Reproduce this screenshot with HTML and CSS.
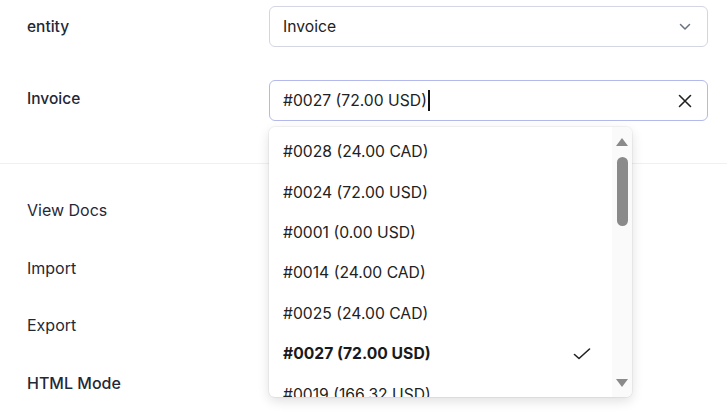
FILE: index.html
```html
<!DOCTYPE html>
<html>
<head>
<meta charset="utf-8">
<link rel="stylesheet" href="styles.css">
</head>
<body>
<div class="page">
  <section class="form">
    <div class="row">
      <div class="label">entity</div>
      <div class="field">
        <span class="value">Invoice</span>
        <svg class="chev" width="12" height="8" viewBox="0 0 12 8"><path d="M1.5 1.5 L6 6 L10.5 1.5" fill="none" stroke="#6b7280" stroke-width="1.5" stroke-linecap="round" stroke-linejoin="round"/></svg>
      </div>
    </div>
    <div class="row row-second">
      <div class="label label-up">Invoice</div>
      <div class="field focused">
        <span class="value">#0027 (72.00 USD)<span class="caret"></span></span>
        <svg class="clear" width="14" height="14" viewBox="0 0 14 14"><path d="M1.5 1.5 L12.5 12.5 M12.5 1.5 L1.5 12.5" fill="none" stroke="#222" stroke-width="1.6" stroke-linecap="round"/></svg>
        <div class="dropdown">
          <ul class="options">
            <li>#0028 (24.00 CAD)</li>
            <li>#0024 (72.00 USD)</li>
            <li>#0001 (0.00 USD)</li>
            <li>#0014 (24.00 CAD)</li>
            <li>#0025 (24.00 CAD)</li>
            <li class="selected"><span>#0027 (72.00 USD)</span><svg width="18" height="12" viewBox="0 0 18 12"><path d="M1.5 6.5 L6 10.5 L16.5 1" fill="none" stroke="#222" stroke-width="1.6" stroke-linecap="round" stroke-linejoin="round"/></svg></li>
            <li>#0019 (166.32 USD)</li>
          </ul>
          <div class="scrollbar">
            <div class="arrow up"></div>
            <div class="thumb"></div>
            <div class="spacer"></div>
            <div class="arrow down"></div>
          </div>
        </div>
      </div>
    </div>
  </section>
  <nav class="menu">
    <div class="menu-item">View Docs</div>
    <div class="menu-item">Import</div>
    <div class="menu-item">Export</div>
    <div class="menu-item strong">HTML Mode</div>
  </nav>
</div>
</body>
</html>
```
FILE: styles.css
```css
* { box-sizing: border-box; }
html, body { margin: 0; padding: 0; background: #fff; }
body {
  font-family: Inter, "Noto Sans", sans-serif;
  color: #1f2937;
  width: 727px;
  height: 417px;
  overflow: hidden;
}
.form {
  padding: 6px 19px 0 27px;
  height: 164px;
  border-bottom: 1px solid #f0f0f2;
}
.row {
  display: flex;
  align-items: center;
  height: 41px;
}
.row-second { margin-top: 33px; }
.label {
  width: 242px;
  font-size: 15.5px;
  font-weight: 500;
  color: #1f2937;
}
.label-up { padding-bottom: 4px; }
.field {
  position: relative;
  flex: 1;
  height: 41px;
  border: 1px solid #d3d5e3;
  border-radius: 6px;
  display: flex;
  align-items: center;
  justify-content: space-between;
  padding: 0 14px 0 13px;
  font-size: 15.7px;
  color: #222;
}
.field.focused { border-color: #b3b9ec; }
.value { display: flex; align-items: center; }
.caret {
  display: inline-block;
  width: 2px;
  height: 21px;
  background: #111;
  margin-left: 1px;
}
.chev { margin-right: 2px; }
.clear { margin-right: 1px; }
.dropdown {
  position: absolute;
  left: -1px;
  top: 46px;
  width: 363px;
  height: 270px;
  background: #fff;
  border-radius: 6px;
  box-shadow: 0 0 0 1px rgba(0,0,0,0.04), 0 4px 12px rgba(0,0,0,0.13);
  display: flex;
  overflow: hidden;
}
.options {
  list-style: none;
  margin: 0;
  padding: 4.5px 0 0;
  flex: 1;
}
.options li {
  height: 40.4px;
  display: flex;
  align-items: center;
  justify-content: space-between;
  padding: 0 21px 0 14px;
  font-size: 15.7px;
  color: #222;
}
.options li.selected { font-weight: 700; color: #1a1a1a; }
.scrollbar {
  width: 20px;
  background: #fafafa;
  display: flex;
  flex-direction: column;
  align-items: center;
  padding: 11px 0 10px;
}
.arrow {
  width: 0; height: 0;
  border-left: 6px solid transparent;
  border-right: 6px solid transparent;
}
.arrow.up { border-bottom: 8px solid #8a8a8a; }
.arrow.down { border-top: 8px solid #8a8a8a; }
.thumb {
  width: 11px;
  height: 69px;
  margin-top: 11px;
  background: #8a8a8a;
  border-radius: 6px;
}
.spacer { flex: 1; }
.menu {
  padding: 36px 0 0 27px;
  display: flex;
  flex-direction: column;
}
.menu-item {
  height: 57.7px;
  font-size: 16px;
  color: #1f2937;
}
.menu-item.strong { font-weight: 500; }
```
